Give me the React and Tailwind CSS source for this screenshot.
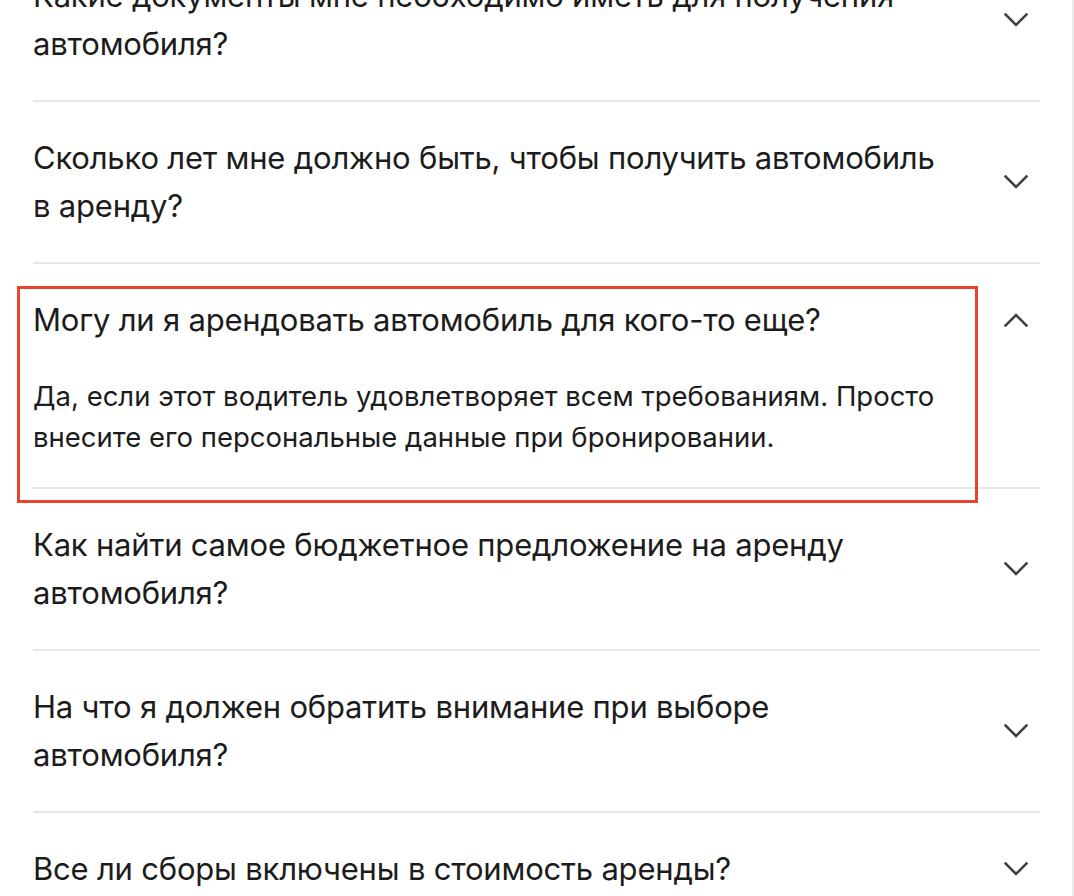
import React, { useState } from 'react';

const faqs = [
  {
    q: 'Какие документы мне необходимо иметь для получения автомобиля?',
    a: 'Водительское удостоверение, паспорт и кредитная карта на имя основного водителя.',
  },
  {
    q: 'Сколько лет мне должно быть, чтобы получить автомобиль в аренду?',
    a: 'Минимальный возраст зависит от компании проката и категории автомобиля.',
  },
  {
    q: 'Могу ли я арендовать автомобиль для кого-то еще?',
    a: 'Да, если этот водитель удовлетворяет всем требованиям. Просто внесите его персональные данные при бронировании.',
  },
  {
    q: 'Как найти самое бюджетное предложение на аренду автомобиля?',
    a: 'Сравните предложения разных компаний и бронируйте заранее.',
  },
  {
    q: 'На что я должен обратить внимание при выборе автомобиля?',
    a: 'Обратите внимание на размер, тип коробки передач и условия по топливу.',
  },
  {
    q: 'Все ли сборы включены в стоимость аренды?',
    a: 'Большинство сборов включены, но некоторые оплачиваются на месте.',
  },
];

function Chevron({ up }) {
  return (
    <svg
      viewBox="0 0 24 14"
      className={up ? 'w-[24px] h-[14px] rotate-180' : 'w-[24px] h-[14px]'}
      fill="none"
      stroke="#404040"
      strokeWidth="2.6"
      strokeLinecap="square"
    >
      <polyline points="1.5,1.5 12,12 22.5,1.5" />
    </svg>
  );
}

export default function App() {
  const [open, setOpen] = useState(2);

  return (
    <div
      className="flex h-screen overflow-hidden bg-white text-[#1c1c1c]"
      style={{ fontFamily: 'Inter, "Noto Sans", sans-serif' }}
    >
      <div className="flex-1 pl-[33px] pr-[32px]">
        <div className="-mt-[60px]">
          {faqs.map((item, i) => {
            const isOpen = open === i;
            return (
              <div key={i} className="relative border-b-2 border-[#e6e6e6]">
                <button
                  className="flex w-full items-center justify-between pt-8 pb-8 text-left"
                  onClick={() => setOpen(isOpen ? null : i)}
                >
                  <span className="max-w-[915px] text-[31px] leading-[48px] tracking-[-0.2px]">
                    {item.q}
                  </span>
                  <span className="mr-[12px] flex shrink-0">
                    <Chevron up={isOpen} />
                  </span>
                </button>
                {isOpen && (
                  <p className="max-w-[929px] pb-[29px] text-[27.5px] leading-[41px]">
                    {item.a}
                  </p>
                )}
                {isOpen && (
                  <div className="pointer-events-none absolute -left-4 top-[22px] -bottom-[16px] w-[961px] border-[3px] border-[#e8432b]" />
                )}
              </div>
            );
          })}
        </div>
      </div>
      <div className="w-[2px] shrink-0 bg-[#ebebeb]" />
    </div>
  );
}
